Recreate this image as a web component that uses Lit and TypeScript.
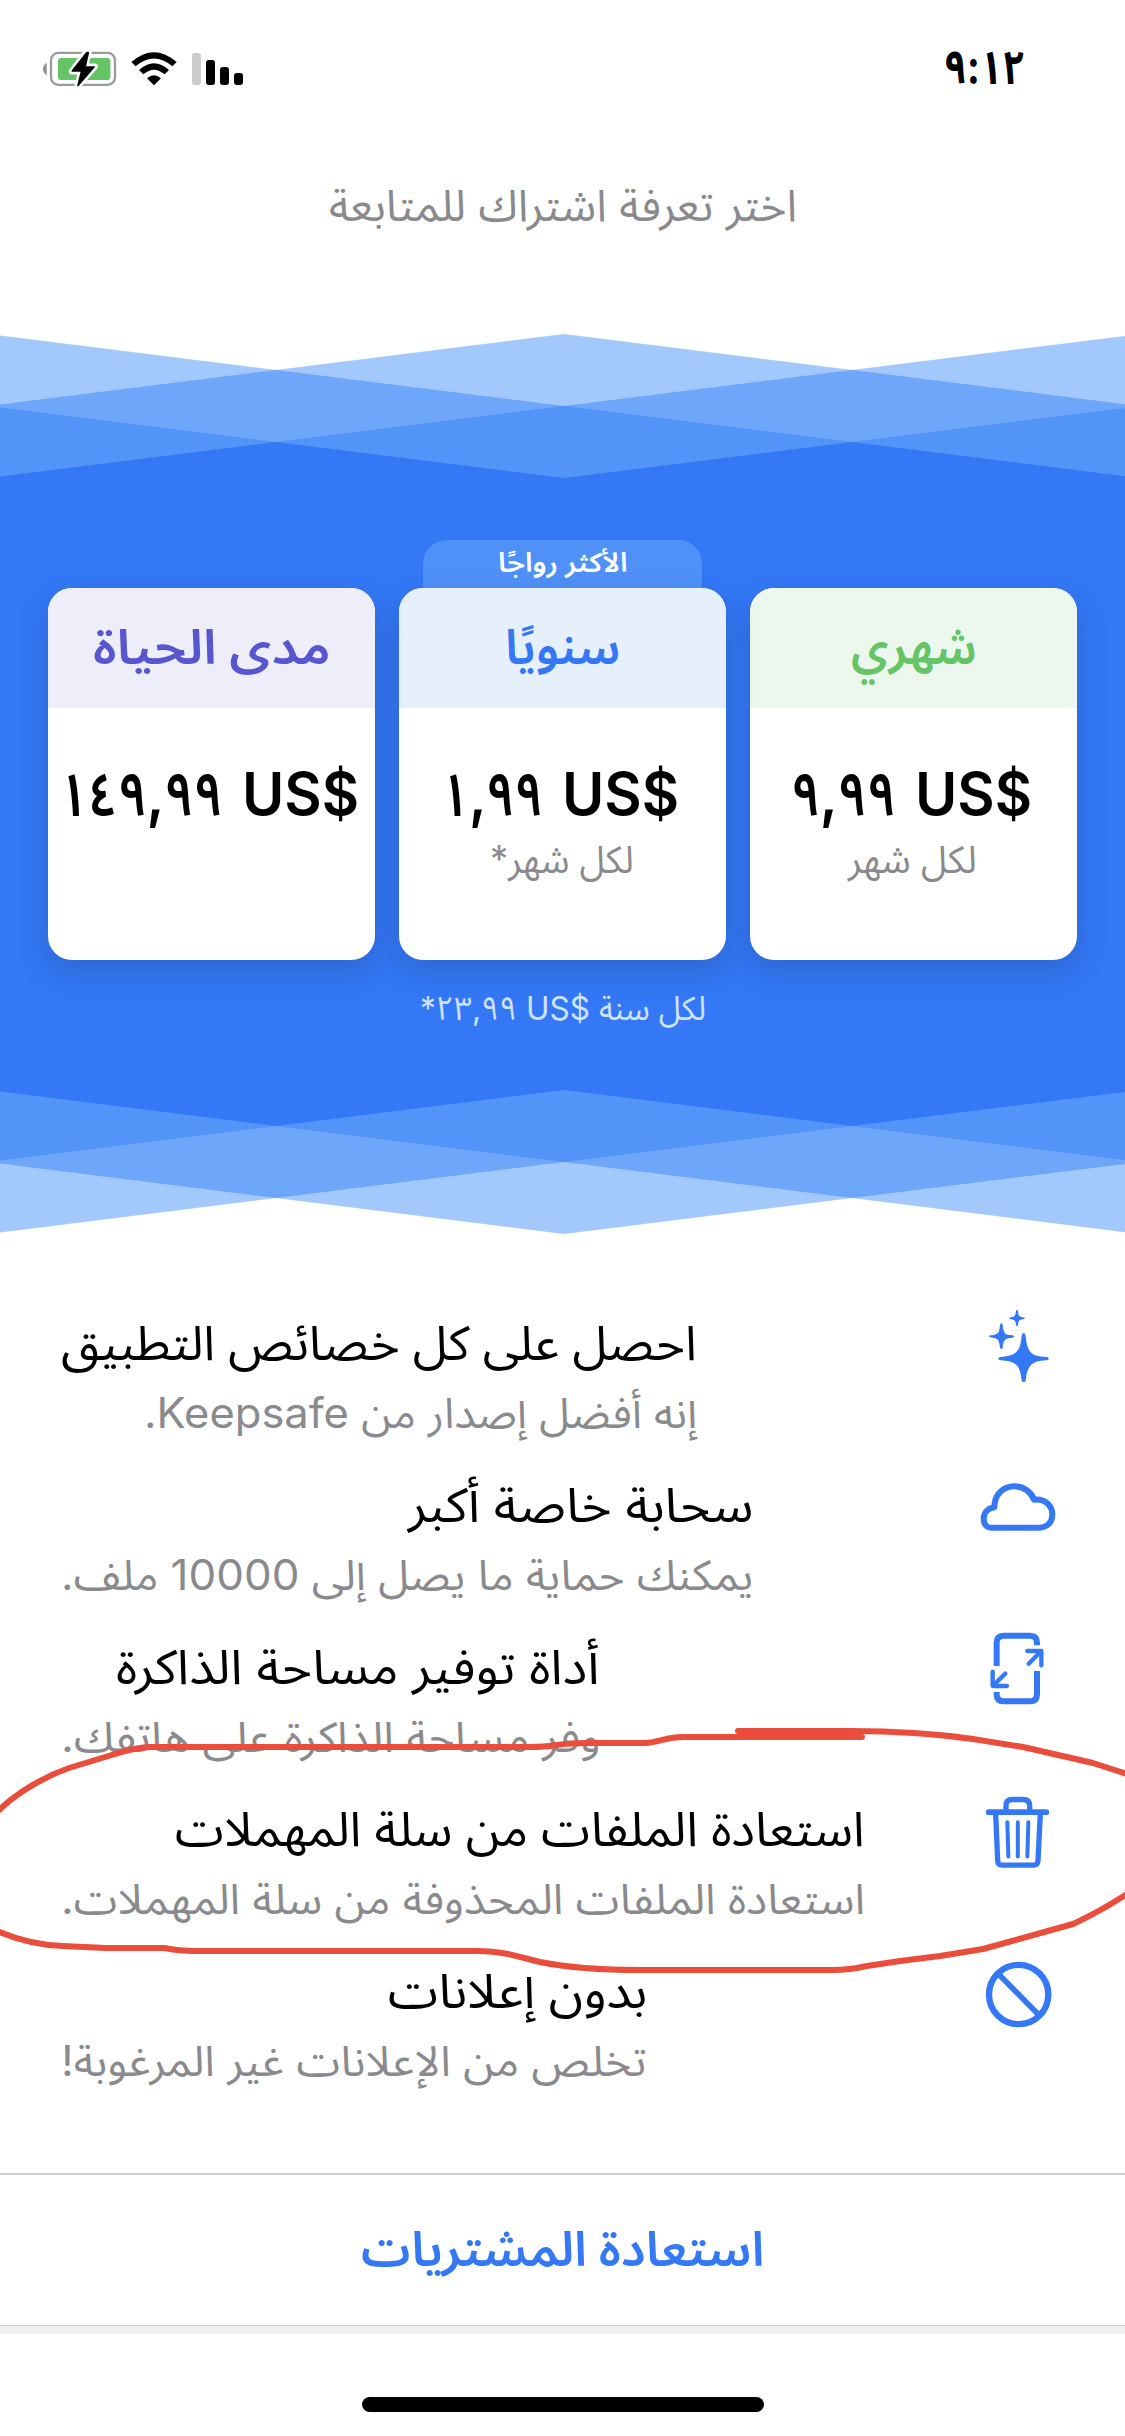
import { LitElement, html, svg, css } from "lit";
import { customElement, property, query } from "lit/decorators.js";
import { styleMap } from "lit/directives/style-map.js";

/** One line of text condensed or widened to an exact measure. */
@customElement("fit-text")
class FitText extends LitElement {
  @property({ type: Number }) width = 100;
  @query(".inner") inner!: HTMLElement;

  static styles = css`
    :host { display: block; white-space: nowrap; flex: none; }
    .inner { display: inline-block; transform-origin: 0 50%; white-space: nowrap; }
    .box { display: flex; direction: ltr; }
    .inner.rtl { direction: rtl; }
  `;

  updated() {
    const natural = this.inner.offsetWidth;
    if (natural) this.inner.style.transform = `scaleX(${this.width / natural})`;
  }

  render() {
    return html`<div class="box" style=${styleMap({ width: `${this.width}px` })}>
      <span class="inner ${this.getAttribute("dir") === "ltr" ? "" : "rtl"}"><slot></slot></span>
    </div>`;
  }
}

interface Plan {
  kind: string;
  name: string;
  nameWidth: number;
  amount: string;
  amountWidth: number;
  period: string;
  periodWidth: number;
  badge?: string;
}

interface Feature {
  icon: unknown;
  title: string;
  titleWidth: number;
  text: string;
  textWidth: number;
}

const plans: Plan[] = [
  { kind: "monthly", name: "شهري", nameWidth: 126, amount: "٩,٩٩", amountWidth: 105, period: "لكل شهر", periodWidth: 129 },
  { kind: "yearly", name: "سنويًا", nameWidth: 115, amount: "١,٩٩", amountWidth: 102, period: "لكل شهر*", periodWidth: 144, badge: "الأكثر رواجًا" },
  { kind: "lifetime", name: "مدى الحياة", nameWidth: 238, amount: "١٤٩,٩٩", amountWidth: 164, period: "", periodWidth: 0 },
];

const sparkles = svg`
  <path d="M143 87Q148 87 149 96C152 134 163 148 176 153C188 158 201 158 213 159Q218 160 218 164Q218 168 213 169C186 170 171 175 162 187C152 201 151 215 149 231Q148 234 143 234Q138 234 137 231C135 212 132 194 122 184C112 173 95 170 73 169Q67 168 67 164Q67 160 73 159C98 158 114 152 123 142C134 129 135 112 137 96Q138 87 143 87Z"/>
  <path d="M76 58Q79 58 80 63C82 84 86 91 99 93L110 94Q114 95 114 97Q114 100 110 101C91 102 84 105 81 122L80 131Q79 135 76 135Q73 135 72 131C70 109 66 103 50 101L43 100Q39 99 39 97Q39 95 43 94C62 92 69 89 71 71L72 63Q73 58 76 58Z"/>
  <path d="M123 18Q126 18 126 22C127 35 130 38 141 40Q147 41 147 43Q147 45 141 46C130 47 128 50 126 62Q126 67 123 67Q121 67 120 62C118 50 116 47 105 46Q99 45 99 43Q99 41 105 40C116 39 118 35 120 22Q120 18 123 18Z"/>`;

const cloud = svg`<path class="line" stroke-width="18" stroke-linejoin="round" transform="translate(0 45)"
  d="M46 140C30 140 23 128 23 113C23 94 36 82 55 79C55 42 80 16 116 16C144 16 166 34 174 56C207 52 229 74 229 101C229 122 214 140 190 140Z"/>`;

const resize = svg`
  <g transform="translate(0 16)">
    <g class="line" stroke-width="18">
      <path d="M62 98V28Q62 7 83 7H162Q183 7 183 28V36"/>
      <path d="M183 113V183Q183 204 162 204H83Q62 204 62 183V176"/>
    </g>
    <g class="line" stroke-width="13" stroke-linecap="round" stroke-linejoin="round">
      <path d="M154 53H196V96M196 53L158 91"/>
      <path d="M50 115V158H93M50 158L88 121"/>
    </g>
  </g>`;

const trash = svg`
  <g class="line" transform="translate(0 5.500)">
    <path stroke-width="17" stroke-linecap="round" d="M38 61H211"/>
    <path stroke-width="16" d="M90 56V42Q90 23 109 23H141Q161 23 161 42V56"/>
    <path stroke-width="16" d="M59 65L65 207Q66 220 78 220H172Q185 220 186 207L193 65"/>
    <path stroke-width="12" stroke-linecap="round" d="M94 91L97 194M125.500 91V194M157 91L154 194"/>
  </g>`;

const blocked = svg`
  <g class="line" transform="translate(0 1.500)">
    <circle stroke-width="19" cx="128" cy="126" r="89"/>
    <path stroke-width="17" d="M68 65L188 187"/>
  </g>`;

const features: Feature[] = [
  { icon: sparkles, title: "احصل على كل خصائص التطبيق", titleWidth: 636, text: "إنه أفضل إصدار من Keepsafe.", textWidth: 553 },
  { icon: cloud, title: "سحابة خاصة أكبر", titleWidth: 345, text: "يمكنك حماية ما يصل إلى 10000 ملف.", textWidth: 692 },
  { icon: resize, title: "أداة توفير مساحة الذاكرة", titleWidth: 484, text: "وفر مساحة الذاكرة على هاتفك.", textWidth: 539 },
  { icon: trash, title: "استعادة الملفات من سلة المهملات", titleWidth: 690, text: "استعادة الملفات المحذوفة من سلة المهملات.", textWidth: 804 },
  { icon: blocked, title: "بدون إعلانات", titleWidth: 259, text: "تخلص من الإعلانات غير المرغوبة!", textWidth: 586 },
];

@customElement("app-root")
class AppRoot extends LitElement {
  static styles = css`
    :host {
      display: block;
      width: 1125px;
      height: 2436px;
      overflow: hidden;
      background: #fff;
      color: #000;
      font-family: Inter, "Noto Sans Arabic", "DejaVu Sans", sans-serif;
    }
    * { box-sizing: border-box; }
    .screen {
      position: relative;
      display: flex;
      flex-direction: column;
      height: 2436px;
      direction: rtl;
    }
    .status {
      display: flex;
      justify-content: space-between;
      align-items: flex-start;
      height: 135px;
      padding: 37px 100px 0 35px;
    }
    .time { font-size: 47px; line-height: 60px; font-weight: 700; }
    .status svg { width: 220px; height: 60px; margin-top: 3px; }
    .heading {
      display: flex;
      justify-content: center;
      height: 199px;
      padding-top: 40px;
      font-size: 44px;
      line-height: 60px;
      color: #8a8a8e;
    }
    .plans {
      position: relative;
      display: flex;
      flex-direction: column;
      align-items: center;
      height: 900px;
      padding-top: 206px;
    }
    .waves { position: absolute; inset: 0; width: 1125px; height: 900px; }
    .cards { position: relative; display: flex; gap: 24px; }
    .plan { display: flex; flex-direction: column; align-items: center; width: 327px; }
    .badge {
      display: flex;
      justify-content: center;
      width: 279px;
      height: 48px;
      border-radius: 24px 24px 0 0;
      color: #fff;
      font-size: 27px;
      line-height: 46px;
      font-weight: 650;
    }
    .yearly .badge { background: #5091f8; }
    .card {
      width: 327px;
      height: 372px;
      border-radius: 24px;
      background: #fff;
      box-shadow: 0 12px 30px rgba(30, 60, 120, 0.3);
      overflow: hidden;
    }
    .name {
      display: flex;
      justify-content: center;
      height: 120px;
      padding-top: 29px;
      font-size: 48px;
      line-height: 60px;
      font-weight: 650;
    }
    .monthly .name { background: #ecf7ee; color: #65c466; }
    .yearly .name { background: #e6f0fd; color: #3478f6; }
    .lifetime .name { background: #eeeefa; color: #5856ce; }
    .price {
      display: flex;
      direction: ltr;
      justify-content: center;
      gap: 19px;
      margin-top: 51px;
      padding-right: 5px;
      font-size: 59px;
      line-height: 70px;
      font-weight: 600;
    }
    .amount { font-size: 61px; font-weight: 650; }
    .period {
      display: flex;
      justify-content: center;
      margin-top: 0;
      padding-right: 2px;
      font-size: 38px;
      line-height: 60px;
      color: #8a8a8e;
    }
    .note {
      position: relative;
      margin-top: 18px;
      font-size: 33px;
      line-height: 60px;
      color: #cfe2fd;
    }
    .features { height: 939px; padding: 56px 65px 0 61px; }
    .feature { display: flex; justify-content: space-between; height: 162px; }
    .feature svg { width: 84px; height: 84px; margin-top: 14px; fill: #3478f6; overflow: visible; }
    .line { fill: none; stroke: #3478f6; }
    .copy { display: flex; flex-direction: column; align-items: flex-start; gap: 10px; padding-top: 23px; }
    .title { font-size: 48px; line-height: 60px; font-weight: 450; }
    .text { font-size: 42px; line-height: 60px; color: #8a8a8e; }
    .restore {
      display: flex;
      justify-content: center;
      height: 153px;
      padding-top: 44px;
      border-top: 2px solid #cdcdd4;
      border-bottom: 1px solid #cdcdd2;
      font-size: 48px;
      line-height: 60px;
      font-weight: 650;
      color: #3478f6;
    }
    .band { height: 8px; background: #efeff4; }
    .home { width: 402px; height: 15px; margin: 63px auto 0; border-radius: 8px; background: #000; }
    .marker {
      position: absolute;
      left: 0;
      top: 1700px;
      width: 1125px;
      height: 300px;
      fill: none;
      stroke: #eb4d3d;
      stroke-width: 6;
      stroke-linecap: round;
      stroke-linejoin: round;
    }
  `;

  private statusIcons() {
    return html`<svg viewBox="0 0 660 180">
      <path fill="#8f8f8f" d="M35 68V106Q24 99 24 87Q24 75 35 68Z"/>
      <rect x="48" y="38.500" width="192" height="96" rx="22" fill="none" stroke="#9b9b9b" stroke-width="7"/>
      <rect x="69" y="54" width="157" height="66" rx="9" fill="#65c466"/>
      <path d="M154 36L111 94H139L128 138L179 80H150L161 36Z" fill="#fff" stroke="#fff" stroke-width="19" stroke-linejoin="round"/>
      <path d="M155 38L112 93H140L129 136L177 81H150L160 38Z" stroke="#000" stroke-width="5" stroke-linejoin="round"/>
      <path d="M289 66Q357 7 425 66L412 79Q357 32 302 79Z"/>
      <path d="M312 90Q357 49 402 90L389 103Q357 75 325 103Z"/>
      <path d="M336 115Q357 97 378 115L357 136Z"/>
      <rect x="471" y="39" width="27" height="96" rx="9" fill="#ccc"/>
      <rect x="513" y="60" width="27" height="75" rx="9"/>
      <rect x="555" y="81" width="27" height="54" rx="9"/>
      <rect x="597" y="99" width="27" height="36" rx="9"/>
    </svg>`;
  }

  private waves() {
    return html`<svg class="waves" viewBox="0 334 1125 900">
      <path fill="#a3c8fb" d="M-12 334L276 370L564 334L852 370L1140 334V1234L852 1198L564 1234L276 1198L-12 1234Z"/>
      <path fill="#6ea6f9" d="M-12 406L276 370L564 406L852 370L1140 406V1162L852 1198L564 1162L276 1198L-12 1162Z"/>
      <path fill="#5294f7" d="M-12 406L276 442L564 406L852 442L1140 406V1162L852 1126L564 1162L276 1126L-12 1162Z"/>
      <path fill="#3478f6" d="M-12 478L276 442L564 478L852 442L1140 478V1090L852 1126L564 1090L276 1126L-12 1090Z"/>
    </svg>`;
  }

  private plan(p: Plan) {
    return html`<div class="plan ${p.kind}">
      <div class="badge">${p.badge ? html`<fit-text width="130">${p.badge}</fit-text>` : ""}</div>
      <div class="card">
        <div class="name"><fit-text width=${p.nameWidth}>${p.name}</fit-text></div>
        <div class="price">
          <fit-text class="amount" dir="ltr" width=${p.amountWidth}>${p.amount}</fit-text>
          <fit-text dir="ltr" width="117">US$</fit-text>
        </div>
        ${p.period ? html`<div class="period"><fit-text width=${p.periodWidth}>${p.period}</fit-text></div>` : ""}
      </div>
    </div>`;
  }

  private feature(f: Feature) {
    return html`<div class="feature">
      <svg viewBox="0 0 252 252">${f.icon}</svg>
      <div class="copy">
        <fit-text class="title" width=${f.titleWidth}>${f.title}</fit-text>
        <fit-text class="text" width=${f.textWidth}>${f.text}</fit-text>
      </div>
    </div>`;
  }

  render() {
    return html`<div class="screen">
      <div class="status">
        <fit-text class="time" dir="ltr" width="81">٩:١٢</fit-text>
        ${this.statusIcons()}
      </div>
      <div class="heading"><fit-text width="468">اختر تعرفة اشتراك للمتابعة</fit-text></div>
      <section class="plans">
        ${this.waves()}
        <div class="cards">${plans.map((p) => this.plan(p))}</div>
        <fit-text class="note" width="286">لكل سنة <bdi dir="ltr">٢٣,٩٩ US$</bdi>*</fit-text>
      </section>
      <section class="features">${features.map((f) => this.feature(f))}</section>
      <div class="restore"><fit-text width="403">استعادة المشتريات</fit-text></div>
      <div class="band"></div>
      <div class="home"></div>
      <svg class="marker" viewBox="0 1700 1125 300">
        <path d="M-3 1812Q8 1801 23 1791Q46 1776 69 1768Q92 1761 115 1754Q133 1748 150 1747H528Q545 1747 557 1745T588 1743H645C660 1742 666 1737 683 1737H862"/>
        <path d="M738 1731H850C900 1731 945 1735 973 1739L1023 1747L1093 1763L1130 1775"/>
        <path d="M-3 1931Q30 1945 63 1946L106 1948H164Q178 1951 192 1951H476Q493 1951 508 1954L540 1962Q580 1970 640 1970H832Q850 1970 867 1966L900 1961L940 1956L983 1949L1073 1924Q1101 1911 1130 1892"/>
      </svg>
    </div>`;
  }
}
